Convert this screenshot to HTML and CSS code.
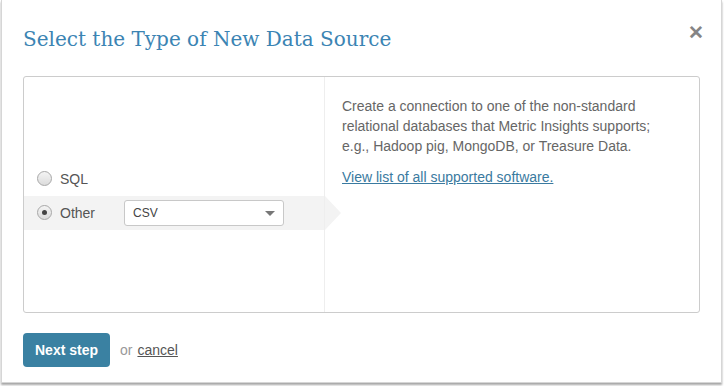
FILE: index.html
```html
<!DOCTYPE html>
<html lang="en">

<head>
    <meta charset="UTF-8">
    <title>Select the Type of New Data Source</title>
    <link rel="stylesheet" href="styles.css">
</head>

<body>
    <div class="dialog">
        <div class="dialog-header">
            <h1>Select the Type of New Data Source</h1>
            <span class="close">&#10005;</span>
        </div>

        <div class="panel">
            <div class="panel-left">
                <label class="option">
                    <span class="radio"></span>
                    <span class="option-label">SQL</span>
                </label>
                <div class="option selected">
                    <span class="radio checked"></span>
                    <span class="option-label">Other</span>
                    <div class="select">
                        <span>CSV</span>
                        <span class="caret"></span>
                    </div>
                </div>
            </div>
            <div class="panel-right">
                <p>Create a connection to one of the non-standard relational databases that Metric Insights supports;
                    e.g., Hadoop pig, MongoDB, or Treasure Data.</p>
                <a href="#" class="link">View list of all supported software.</a>
            </div>
        </div>

        <div class="dialog-footer">
            <button type="button">Next step</button>
            <span class="or">or</span>
            <a href="#" class="cancel">cancel</a>
        </div>
    </div>
</body>

</html>
```

FILE: styles.css
```css
* {
    margin: 0;
    padding: 0;
    box-sizing: border-box;
}

body {
    font-family: 'Liberation Sans', Arial, sans-serif;
    background-color: #ffffff;
    color: #555;
    width: 724px;
    height: 386px;
    overflow: hidden;
}

.dialog {
    margin-left: 1px;
    width: 721px;
    height: 383px;
    background: #fff;
    border: 1px solid #d6d6d6;
    border-top: none;
    box-shadow: 0 2px 2px rgba(0, 0, 0, 0.35);
    padding: 0 21px;
}

.dialog-header {
    display: flex;
    justify-content: space-between;
    align-items: flex-start;
    height: 76px;
    padding-top: 27px;
}

h1 {
    font-family: 'DejaVu Serif', 'Liberation Serif', serif;
    font-weight: normal;
    font-size: 20px;
    color: #3b84b3;
    letter-spacing: 0;
}

.close {
    font-size: 19px;
    font-weight: bold;
    color: #858585;
    margin-top: -6px;
    margin-right: -4px;
}

.panel {
    display: flex;
    height: 237px;
    border: 1px solid #cccccc;
    border-radius: 3px;
}

.panel-left {
    width: 301px;
    border-right: 1px solid #eeeeee;
    display: flex;
    flex-direction: column;
    justify-content: center;
    padding-top: 2px;
}

.option {
    display: flex;
    align-items: center;
    height: 34px;
    padding-left: 13px;
    font-size: 14px;
    color: #555;
    position: relative;
}

.option.selected {
    background: #f3f3f3;
}

.option.selected::after {
    content: "";
    position: absolute;
    right: -17px;
    top: 0;
    border-top: 17px solid transparent;
    border-bottom: 17px solid transparent;
    border-left: 16px solid #f3f3f3;
}

.radio {
    width: 15px;
    height: 15px;
    border-radius: 50%;
    border: 1px solid #a8a8a8;
    background: linear-gradient(#f4f4f4, #dcdcdc);
    margin-right: 8px;
    display: flex;
    align-items: center;
    justify-content: center;
}

.radio.checked::before {
    content: "";
    width: 5px;
    height: 5px;
    border-radius: 50%;
    background: #444;
}

.option-label {
    width: 64px;
}

.select {
    width: 160px;
    height: 26px;
    border: 1px solid #c8c8c8;
    border-radius: 3px;
    background: #fff;
    display: flex;
    align-items: center;
    justify-content: space-between;
    padding: 0 8px;
    font-size: 12px;
    color: #444;
}

.caret {
    border-left: 5px solid transparent;
    border-right: 5px solid transparent;
    border-top: 5px solid #777;
    margin-top: 1px;
}

.panel-right {
    flex: 1;
    padding: 19px 17px 0 17px;
}

.panel-right p {
    max-width: 325px;
    font-size: 14px;
    line-height: 20px;
    color: #666;
    margin-bottom: 12px;
}

.link {
    font-size: 14px;
    color: #3a7aa0;
}

.dialog-footer {
    display: flex;
    align-items: center;
    padding-top: 20px;
}

button {
    font-family: 'Liberation Sans', Arial, sans-serif;
    font-weight: bold;
    font-size: 14px;
    color: #fff;
    background: #3a81a2;
    border: none;
    border-radius: 4px;
    width: 87px;
    height: 34px;
}

.or {
    font-size: 14px;
    color: #999;
    margin-left: 10px;
}

.cancel {
    font-size: 14px;
    color: #555;
    margin-left: 5px;
}
```
